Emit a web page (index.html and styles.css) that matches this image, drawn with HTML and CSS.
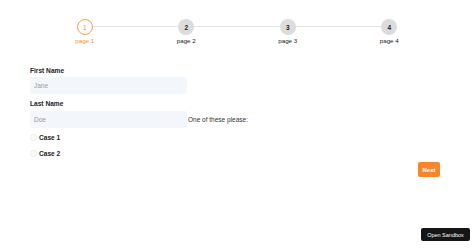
FILE: index.html
```html
<!DOCTYPE html>
<html lang="en">
<head>
<meta charset="utf-8">
<title>Wizard</title>
<link rel="stylesheet" href="styles.css">
</head>
<body>
<div class="page">
  <div class="stepper">
    <div class="step step-active"><span class="dot">1</span><span class="step-label">page 1</span></div>
    <div class="step"><span class="dot">2</span><span class="step-label">page 2</span></div>
    <div class="step"><span class="dot">3</span><span class="step-label">page 3</span></div>
    <div class="step step-last"><span class="dot">4</span><span class="step-label">page 4</span></div>
  </div>
  <form class="form">
    <label class="field-label" for="first">First Name</label>
    <div class="field-row"><input class="text-input" id="first" placeholder="Jane"></div>
    <label class="field-label" for="last">Last Name</label>
    <div class="field-row field-row-last"><input class="text-input" id="last" placeholder="Doe"><span class="hint">One of these please:</span></div>
    <label class="radio-row"><input type="radio" name="case"><span class="radio"></span><span class="radio-text">Case 1</span></label>
    <label class="radio-row"><input type="radio" name="case"><span class="radio"></span><span class="radio-text">Case 2</span></label>
    <div class="actions"><button type="button" class="btn-next">Next</button></div>
  </form>
</div>
<a class="sandbox-btn">Open Sandbox</a>
</body>
</html>
```
FILE: styles.css
```css
html, body {
  margin: 0;
  background: #ffffff;
  font-family: "Liberation Sans", Arial, sans-serif;
  color: #222222;
}
.page {
  padding: 19px 34px 0 30px;
}
.stepper {
  margin-left: 4px;
  display: grid;
  grid-template-columns: repeat(4, 1fr);
}
.step {
  position: relative;
  display: flex;
  flex-direction: column;
  align-items: center;
}
.step::after {
  content: "";
  position: absolute;
  top: 7px;
  left: calc(50% + 8px);
  width: calc(100% - 16px);
  height: 1px;
  background: #e3e3e3;
}
.step-last::after {
  display: none;
}
.dot {
  width: 16px;
  height: 16px;
  box-sizing: border-box;
  border-radius: 50%;
  background: #dcdcdc;
  color: #222;
  font-size: 6.5px;
  font-weight: bold;
  display: flex;
  align-items: center;
  justify-content: center;
}
.step-active .dot {
  background: #fff;
  border: 1px solid #f7a04f;
  color: #f5943c;
  font-weight: normal;
}
.step-label {
  margin-top: 1px;
  font-size: 6.2px;
  line-height: 10px;
  color: #222;
}
.step-active .step-label {
  color: #f5943c;
}
.form {
  margin-top: 20px;
  display: flex;
  flex-direction: column;
}
.field-label {
  font-size: 6.6px;
  font-weight: bold;
  line-height: 10px;
  margin-bottom: 1px;
  color: #222;
}
.field-row {
  display: flex;
  align-items: center;
  margin-bottom: 5px;
}
.field-row + .field-label {
  margin-bottom: 2px;
}
.field-row-last {
  margin-bottom: 1px;
}
.text-input {
  width: 157px;
  height: 17px;
  box-sizing: border-box;
  border: none;
  border-radius: 3px;
  background: #f3f6fa;
  padding: 0 4px;
  font-family: inherit;
  font-size: 6.5px;
  color: #333;
  outline: none;
}
.text-input::placeholder {
  color: #9a9a9a;
}
.hint {
  font-size: 6.5px;
  color: #333;
  margin-left: 1px;
}
.radio-row {
  display: flex;
  align-items: center;
  height: 16px;
}
.radio-row input {
  display: none;
}
.radio {
  width: 7px;
  height: 7px;
  border: 1px solid #e6e6e6;
  border-radius: 50%;
  box-sizing: border-box;
  margin-right: 2px;
}
.radio-text {
  font-size: 6.6px;
  font-weight: bold;
  color: #222;
}
.actions {
  display: flex;
  justify-content: flex-end;
  margin-top: 1px;
}
.btn-next {
  width: 22px;
  height: 15px;
  padding: 0;
  border: none;
  border-radius: 2px;
  background: #f7862b;
  color: #fff;
  font-family: inherit;
  font-size: 6px;
  font-weight: bold;
}
.sandbox-btn {
  position: fixed;
  right: 4px;
  bottom: 7px;
  width: 49px;
  height: 13px;
  border-radius: 2px;
  background: #151515;
  color: #fff;
  font-size: 5.5px;
  display: flex;
  align-items: center;
  justify-content: center;
}
```
